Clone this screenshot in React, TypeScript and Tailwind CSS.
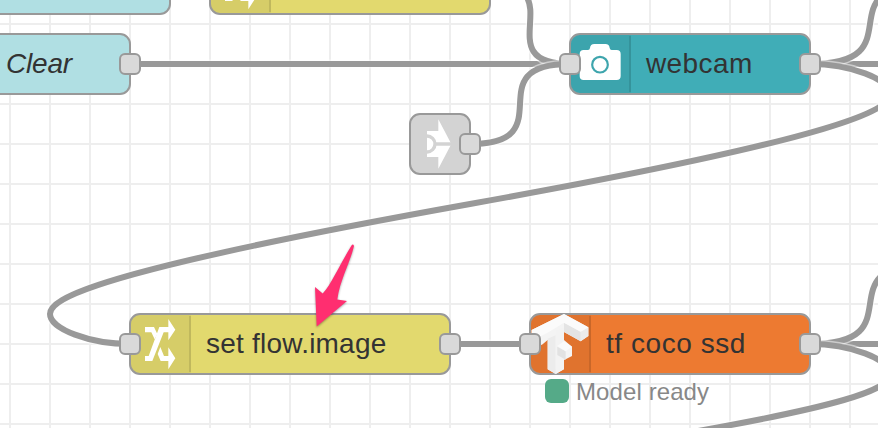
import type { ReactNode } from "react";

function Port({ side }: { side: "left" | "right" }) {
  return (
    <div
      className={`absolute top-[19px] h-[22px] w-[22px] rounded-[6px] border-2 border-[#999] bg-[#d9d9d9] ${
        side === "left" ? "left-[-11px]" : "right-[-11px]"
      }`}
    />
  );
}

function FlowNode({
  place,
  color,
  icon,
  label,
  labelClass = "",
  input = false,
  output = false,
}: {
  place: string;
  color: string;
  icon?: ReactNode;
  label?: string;
  labelClass?: string;
  input?: boolean;
  output?: boolean;
}) {
  return (
    <div className={`absolute h-[60px] ${place}`}>
      <div className={`absolute -inset-px flex overflow-hidden rounded-[11px] border-2 border-[#999] ${color}`}>
        {icon && (
          <div className="flex w-[60px] shrink-0 justify-end bg-black/5 py-px">
            <div className="w-[2px] bg-black/10" />
          </div>
        )}
        {label && (
          <span className={`whitespace-nowrap text-[28px] leading-[57px] text-[#333] ${labelClass}`}>{label}</span>
        )}
      </div>
      {icon && <div className="absolute left-0 top-0 h-[60px] w-[60px]">{icon}</div>}
      {input && <Port side="left" />}
      {output && <Port side="right" />}
    </div>
  );
}

const ChangeIcon = () => (
  <svg viewBox="0 0 180 180" className="h-full w-full" fill="#fff">
    <path d="M45 39H72L82 60L74 76L64 55H45Z" />
    <path d="M45 126H56L88 39H115V15L136 47L115 79V55H101L67 141H45Z" />
    <path d="M91 99L102 126H115V100L136 133L115 166V141H92L83 120Z" />
  </svg>
);

const CameraIcon = () => (
  <svg viewBox="0 0 180 180" className="h-full w-full">
    <path
      fill="#fff"
      d="M41 48H54Q59 48 60 42Q61 30 73 30H106Q118 30 119 42Q120 48 125 48H140Q152 48 152 60V126Q152 138 140 138H41Q29 138 29 126V60Q29 48 41 48Z"
    />
    <circle cx="90" cy="92" r="23.5" fill="none" stroke="#3ea5ad" strokeWidth="6.5" />
  </svg>
);

const LinkIcon = () => (
  <svg viewBox="0 0 180 180" className="h-full w-full">
    <path fill="#fff" d="M51 51H85V16L124 90L85 164V129H51Z" />
    <path d="M51 66A24 24 0 0 1 51 114M75 90H126" fill="none" stroke="#d3d3d3" strokeWidth="10" />
  </svg>
);

const TensorIcon = () => (
  <svg viewBox="0 0 180 180" className="h-full w-full">
    <path fill="#f4f4f4" d="M5 48L102 0L175 40V66L152 82L102 54V78L126 98V126L101 139V166L77 180L53 166V78L36 92L5 98Z" />
    <path fill="#ececec" d="M152 53L175 40V66L152 82ZM53 74L77 64V180L53 166Z" />
    <path fill="#e4e4e4" d="M102 26L152 53V82L102 54Z" />
    <path fill="#f3f3f3" d="M77 52L102 40V166L77 180Z" />
    <path fill="#fbfbfb" d="M5 48L102 0L175 40L152 53L102 26L53 56L5 80Z" />
    <path fill="#e2e2e2" d="M82 98L107 112V137L82 123Z" />
    <path fill="#fafafa" d="M82 96L102 82L126 98L107 112Z" />
  </svg>
);

const wires = [
  "M130 64H570",
  "M490 -16C575 -16 485 64 570 64",
  "M470 144C566 144 474 64 570 64",
  "M810 64H890",
  "M810 64C918 64 822 -16 930 -16",
  "M810 64C850 64 890 79 890 94S850 136 470 204S50 299 50 314S90 344 130 344",
  "M450 344H530",
  "M810 344H890",
  "M810 344C918 344 822 264 930 264",
  "M810 344C850 344 890 359 890 374S850 406 640 441",
];

function Wires() {
  return (
    <svg viewBox="0 0 878 428" className="absolute inset-0 h-full w-full" fill="none">
      {wires.map((d) => (
        <g key={d}>
          <path d={d} stroke="#fff" strokeOpacity="0.5" strokeWidth="9" />
          <path d={d} stroke="#999" strokeWidth="6" />
        </g>
      ))}
    </svg>
  );
}

export default function App() {
  return (
    <div className="relative h-[428px] w-[878px] overflow-hidden bg-white bg-[linear-gradient(to_right,#eee_2px,transparent_2px),linear-gradient(to_bottom,#eee_2px,transparent_2px)] bg-[size:40px_40px] bg-[position:9px_0px,0px_23px] font-['Liberation_Sans',Arial,sans-serif]">
      <Wires />
      <FlowNode place="left-[-40px] top-[-46px] w-[210px]" color="bg-[#b0dfe3]" />
      <FlowNode place="left-[210px] top-[-46px] w-[280px]" color="bg-[#e2d96e]" icon={<ChangeIcon />} />
      <FlowNode
        place="left-[-40px] top-[34px] w-[170px]"
        color="bg-[#b0dfe3]"
        label="Clear"
        labelClass="italic ml-[45px] tracking-[-0.2px]"
        output
      />
      <FlowNode
        place="left-[570px] top-[34px] w-[240px]"
        color="bg-[#40adb7]"
        icon={<CameraIcon />}
        label="webcam"
        labelClass="ml-[15px] tracking-[0.4px]"
        input
        output
      />
      <FlowNode place="left-[410px] top-[114px] w-[60px]" color="bg-[#d3d3d3]" output />
      <div className="absolute left-[410px] top-[114px] h-[60px] w-[49px] overflow-hidden">
        <div className="h-[60px] w-[60px]">
          <LinkIcon />
        </div>
      </div>
      <FlowNode
        place="left-[130px] top-[314px] w-[320px]"
        color="bg-[#e2d96e]"
        icon={<ChangeIcon />}
        label="set flow.image"
        labelClass="ml-[15px] tracking-[0.22px]"
        input
        output
      />
      <FlowNode
        place="left-[530px] top-[314px] w-[280px]"
        color="bg-[#ed7a31]"
        icon={<TensorIcon />}
        label="tf coco ssd"
        labelClass="ml-[15px] tracking-[0.55px]"
        input
        output
      />
      <div className="absolute left-[545px] top-[379px] flex h-6 items-center gap-[7px]">
        <div className="h-6 w-6 rounded-[6px] bg-[#5a8]" />
        <span className="whitespace-nowrap pt-[2px] text-2xl leading-6 tracking-[0.1px] text-[#888]">Model ready</span>
      </div>
      <svg
        viewBox="0 0 90 110"
        className="absolute left-[290px] top-[230px] h-[110px] w-[90px] drop-shadow-[0_1px_1px_rgba(0,0,0,0.35)]"
      >
        <path
          fill="#ff2e70"
          d="M26.7 96.5L25 57L32.7 63.5C41 55 50 34 61.5 15.5Q63 13.5 64 16C60 33 50 50 47.3 69.5L57 71Z"
        />
      </svg>
    </div>
  );
}
